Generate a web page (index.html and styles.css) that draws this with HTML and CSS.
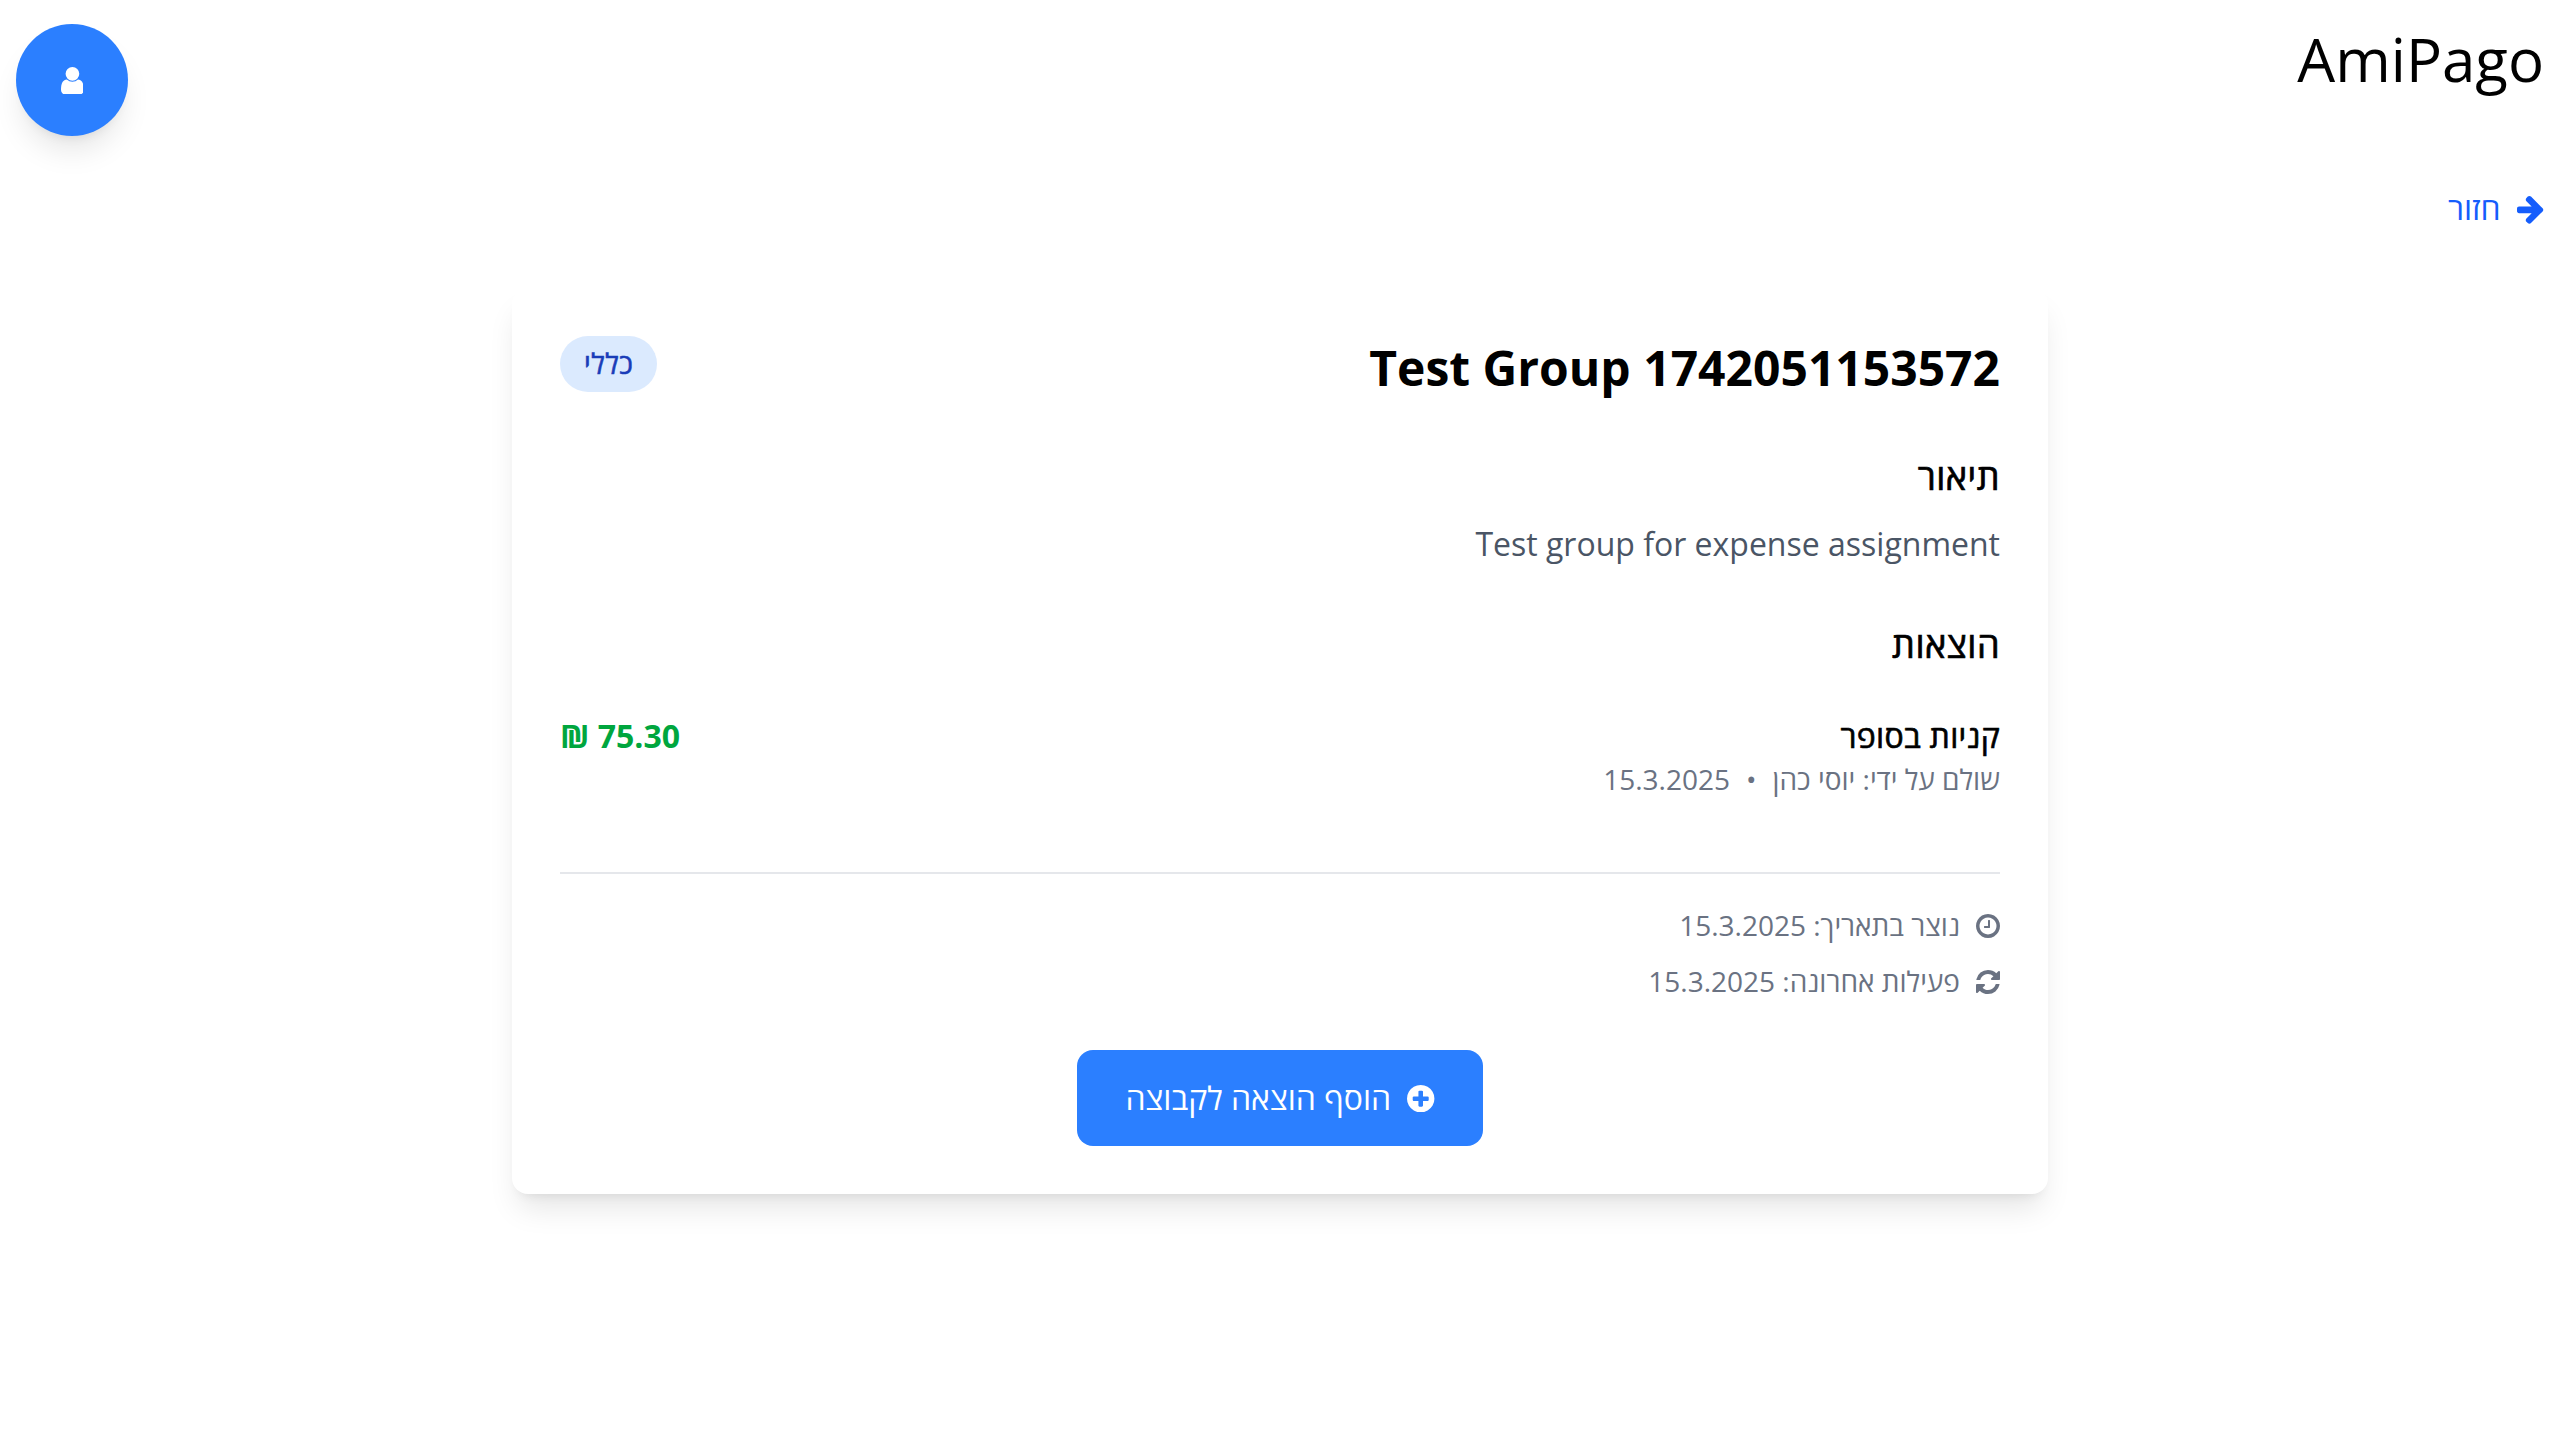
FILE: index.html
```html
<!DOCTYPE html>
<html lang="he" dir="rtl">
<head>
<meta charset="utf-8">
<title>AmiPago</title>
<link rel="stylesheet" href="styles.css">
</head>
<body>
<header class="header">
  <h1 class="brand">AmiPago</h1>
  <button class="user-button" type="button" aria-label="פרופיל">
    <svg class="icon-user" viewBox="256 128 1280 1536"><path d="M1536 1399q0 109-62.500 187t-150.500 78h-854q-88 0-150.500-78t-62.500-187q0-85 8.500-160.500t31.500-152 58.500-131 94-89 134.500-34.500q131 128 313 128t313-128q76 0 134.500 34.500t94 89 58.500 131 31.500 152 8.500 160.500zm-256-887q0 159-112.500 271.500t-271.500 112.500-271.500-112.500-112.500-271.500 112.500-271.500 271.500-112.500 271.500 112.500 112.500 271.500z"/></svg>
  </button>
</header>
<main>
  <nav class="back">
    <a class="back-link" href="#">
      <svg class="icon-arrow" viewBox="128 128 1536 1536"><path d="M1600 960q0 54-37 91l-651 651q-39 37-91 37-51 0-90-37l-75-75q-38-38-38-91t38-91l293-293h-704q-52 0-84.500-37.500t-32.500-90.500v-128q0-53 32.500-90.500t84.500-37.500h704l-293-294q-38-36-38-90t38-90l75-75q38-38 90-38 53 0 91 38l651 651q37 35 37 90z"/></svg>
      <span>חזור</span>
    </a>
  </nav>
  <section class="card">
    <div class="card-head">
      <h2 class="group-name">Test Group 1742051153572</h2>
      <span class="badge">כללי</span>
    </div>
    <section class="block">
      <h3 class="block-title">תיאור</h3>
      <p class="description">Test group for expense assignment</p>
    </section>
    <section class="block">
      <h3 class="block-title">הוצאות</h3>
      <div class="expense">
        <div>
          <p class="expense-name">קניות בסופר</p>
          <p class="expense-meta"><span>שולם על ידי: יוסי כהן</span><span class="dot">•</span><span>15.3.2025</span></p>
        </div>
        <span class="amount">75.30 ₪</span>
      </div>
    </section>
    <footer class="facts">
      <div class="fact">
        <svg class="icon-small" viewBox="128 128 1536 1536"><path d="M1024 544v448q0 14-9 23t-23 9h-320q-14 0-23-9t-9-23v-64q0-14 9-23t23-9h224v-352q0-14 9-23t23-9h64q14 0 23 9t9 23zm416 352q0-148-73-273t-198-198-273-73-273 73-198 198-73 273 73 273 198 198 273 73 273-73 198-198 73-273zm224 0q0 209-103 385.500t-279.500 279.500-385.500 103-385.500-103-279.500-279.500-103-385.500 103-385.500 279.500-279.500 385.500-103 385.500 103 279.500 279.500 103 385.500z"/></svg>
        <span class="fact-text">נוצר בתאריך: 15.3.2025</span>
      </div>
      <div class="fact">
        <svg class="icon-small" viewBox="128 128 1536 1536"><path d="M1639 1056q0 5-1 7-64 268-268 434.500t-478 166.500q-146 0-282.500-55t-243.500-157l-129 129q-19 19-45 19t-45-19-19-45v-448q0-26 19-45t45-19h448q26 0 45 19t19 45-19 45l-137 137q71 66 161 102t187 36q134 0 250-65t186-179q11-17 53-117 8-23 30-23h192q13 0 22.500 9.500t9.500 22.500zm25-800v448q0 26-19 45t-45 19h-448q-26 0-45-19t-19-45 19-45l138-138q-148-137-349-137-134 0-250 65t-186 179q-11 17-53 117-8 23-30 23h-199q-13 0-22.500-9.500t-9.500-22.500v-7q65-268 270-434.500t480-166.500q146 0 284 55.500t245 156.500l130-129q19-19 45-19t45 19 19 45z"/></svg>
        <span class="fact-text">פעילות אחרונה: 15.3.2025</span>
      </div>
    </footer>
    <div class="actions">
      <button class="add-button" type="button">
        <svg class="icon-plus" viewBox="128 128 1536 1536"><path d="M1344 960v-128q0-26-19-45t-45-19h-256v-256q0-26-19-45t-45-19h-128q-26 0-45 19t-19 45v256h-256q-26 0-45 19t-19 45v128q0 26 19 45t45 19h256v256q0 26 19 45t45 19h128q26 0 45-19t19-45v-256h256q26 0 45-19t19-45zm320-64q0 209-103 385.500t-279.500 279.500-385.500 103-385.500-103-279.500-279.500-103-385.500 103-385.500 279.500-279.500 385.500-103 385.500 103 279.500 279.500 103 385.500z"/></svg>
        <span>הוסף הוצאה לקבוצה</span>
      </button>
    </div>
  </section>
</main>
</body>
</html>
```
FILE: styles.css
```css
* {
  box-sizing: border-box;
  margin: 0;
  padding: 0;
}

body {
  min-height: 100vh;
  background: #fff;
  color: #000;
  font-family: "Open Sans", "Noto Sans", sans-serif;
  font-size: 32px;
  line-height: 48px;
}

button {
  border: 0;
  font: inherit;
  color: #fff;
  background: #2b7fff;
}

svg {
  display: block;
  flex: none;
  fill: currentColor;
}

.header {
  display: flex;
  justify-content: space-between;
  align-items: flex-start;
  padding: 24px 16px 0;
}

.brand {
  font-size: 60px;
  line-height: 70px;
  font-weight: 400;
}

.user-button {
  display: flex;
  align-items: center;
  justify-content: center;
  width: 112px;
  height: 112px;
  border-radius: 50%;
  box-shadow: 0 20px 30px -6px rgba(0, 0, 0, 0.1), 0 8px 12px -8px rgba(0, 0, 0, 0.1);
}

.icon-user {
  width: 22.86px;
  height: 27.43px;
  margin-top: 1.5px;
}

.back {
  display: flex;
  padding: 48px 16px 0;
}

.back-link {
  display: flex;
  align-items: center;
  gap: 16px;
  color: #155dfc;
  text-decoration: none;
}

.icon-arrow,
.icon-plus {
  width: 27.43px;
  height: 27.43px;
  margin-top: 1px;
}

.icon-arrow {
  overflow: visible;
}

.card {
  width: 1536px;
  margin: 56px auto 0;
  padding: 48px;
  border-radius: 16px;
  background: #fff;
  box-shadow: 0 20px 30px -6px rgba(0, 0, 0, 0.1), 0 8px 12px -8px rgba(0, 0, 0, 0.1);
}

.card-head {
  display: flex;
  justify-content: space-between;
  align-items: flex-start;
}

.group-name {
  font-size: 48px;
  line-height: 64px;
  font-weight: 700;
}

/* Medium weight: the family has no 500 face, so the regular one is thickened */
.badge,
.block-title,
.expense-name {
  font-weight: 400;
  -webkit-text-stroke: 0.02em currentColor;
}

.badge {
  padding: 8px 24px 10px;
  border-radius: 28px;
  background: #dbeafe;
  color: #193cb8;
  font-size: 28px;
  line-height: 38px;
  letter-spacing: 0.5px;
}

.block {
  margin-top: 48px;
}

.block-title {
  margin-bottom: 15px;
  font-size: 36px;
  line-height: 57px;
  letter-spacing: 0.5px;
}

.description {
  color: #4a5565;
}

.expense {
  display: flex;
  justify-content: space-between;
  align-items: flex-start;
  padding: 24px 0;
}

.expense-name {
  letter-spacing: 0.3px;
}

.expense-meta {
  padding-bottom: 2px;
  color: #6a7282;
  font-size: 28px;
  line-height: 38px;
}

.dot {
  margin: 0 16px;
}

.amount {
  color: #00a63e;
  font-weight: 700;
}

.facts {
  display: flex;
  flex-direction: column;
  gap: 16px;
  margin-top: 48px;
  padding-top: 32px;
  border-top: 2px solid #e5e7eb;
  color: #6a7282;
  font-size: 28px;
  line-height: 38px;
}

.fact {
  display: flex;
  align-items: center;
  gap: 16px;
}

.fact-text {
  padding-bottom: 2px;
}

.icon-small {
  width: 24px;
  height: 24px;
}

.actions {
  display: flex;
  justify-content: center;
  margin-top: 48px;
}

.add-button {
  display: flex;
  align-items: center;
  gap: 16px;
  padding: 24px 48px;
  border-radius: 16px;
}
```
